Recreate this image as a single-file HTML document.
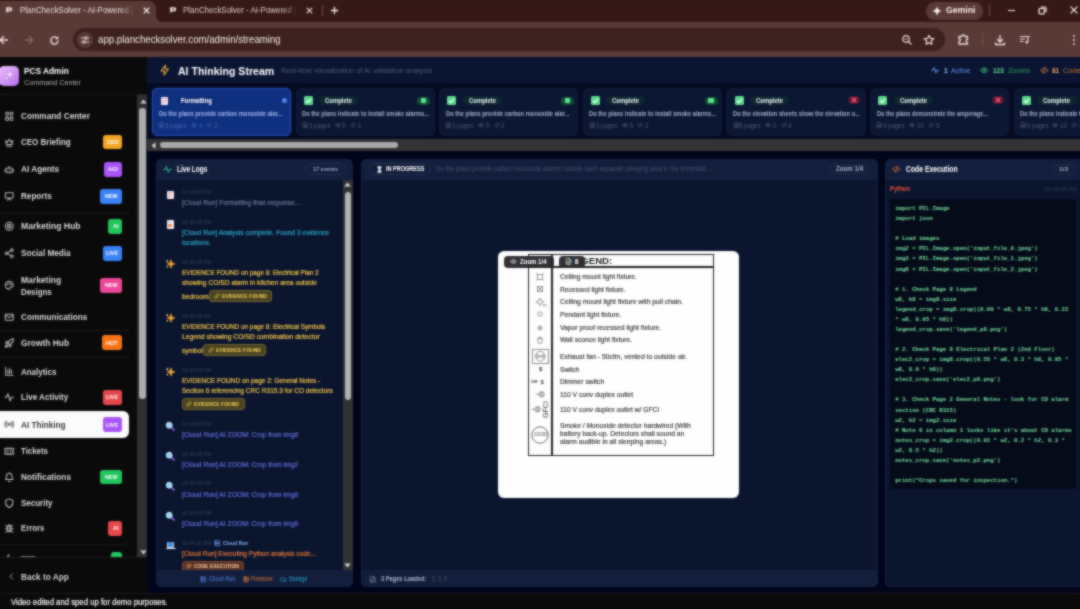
<!DOCTYPE html>
<html lang="en">
<head>
<meta charset="utf-8">
<title>PlanCheckSolver - AI-Powered</title>
<style>
*{box-sizing:border-box;margin:0;padding:0}
html,body{width:1080px;height:609px;overflow:hidden;background:#000}
body{font-family:"Liberation Sans",sans-serif;position:relative;color:#fff}
#pg{position:absolute;left:0;top:0;width:1080px;height:609px;overflow:hidden}
#soft{position:absolute;left:0;top:0;width:1080px;height:609px;-webkit-backdrop-filter:blur(.8px);backdrop-filter:blur(.8px);opacity:.7;pointer-events:none}
.abs{position:absolute}
.t{position:absolute;white-space:pre;line-height:1}
</style>
</head>
<body>
<div id="pg">
<!-- browser chrome -->
<div class="abs" style="left:0.0px;top:0.0px;width:1080.0px;height:23.0px;background:#371a17;"></div>
<div class="abs" style="left:0.0px;top:22.0px;width:1080.0px;height:34.5px;background:#5a3a36;"></div>
<div class="abs" style="left:-8.0px;top:1.0px;width:164.0px;height:24.0px;background:#5a3a36;border-radius:8px 8px 0 0;"></div>
<svg class="abs" style="left:156.0px;top:16.0px" width="6" height="6" viewBox="0 0 6 6" ><path d="M0 6V0a6 6 0 0 0 6 6z" fill="#5a3a36"/></svg>
<div class="abs" style="left:73.0px;top:28.3px;width:872.0px;height:22.8px;background:#3e211e;border-radius:11.4px;"></div>
<div class="abs" style="left:926.0px;top:2.0px;width:57.0px;height:17.5px;background:#5a3a36;border-radius:8.75px;"></div>
<svg class="abs" style="left:5.0px;top:6.0px" width="8" height="8" viewBox="0 0 8 8" ><path d="M1 1.200h4.200a2 2 0 0 1 0 4.200H3L1.400 7z" fill="#eadedb"/><circle cx="4.300" cy="3.300" r=".900" fill="#5a3a36"/></svg>
<span class="t" style="left:20.0px;top:6px;font-size:8.6px;color:#eadedb;transform:scaleX(0.923);transform-origin:0 0;-webkit-mask-image:linear-gradient(90deg,#000 108.3px,transparent 124.6px);overflow:hidden;width:127.8px;">PlanCheckSolver - AI-Powered | Plan</span>
<svg class="abs" style="left:143.0px;top:7.0px" width="7" height="7" viewBox="0 0 7 7" ><path d="M.8.800l5.400 5.400M6.200.800L.8 6.200" stroke="#f4eae8" stroke-width="1.300" fill="none"/></svg>
<svg class="abs" style="left:169.0px;top:6.0px" width="8" height="8" viewBox="0 0 8 8" ><path d="M1 1.200h4.200a2 2 0 0 1 0 4.200H3L1.400 7z" fill="#eadedb"/><circle cx="4.300" cy="3.300" r=".900" fill="#371a17"/></svg>
<span class="t" style="left:183.0px;top:6px;font-size:8.6px;color:#dccfcc;transform:scaleX(0.923);transform-origin:0 0;-webkit-mask-image:linear-gradient(90deg,#000 108.3px,transparent 124.6px);overflow:hidden;width:127.8px;">PlanCheckSolver - AI-Powered | Plan</span>
<svg class="abs" style="left:306.0px;top:7.0px" width="7" height="7" viewBox="0 0 7 7" ><path d="M.8.800l5.400 5.400M6.200.800L.8 6.200" stroke="#eadedb" stroke-width="1.200" fill="none"/></svg>
<div class="abs" style="left:322.0px;top:5.0px;width:1.0px;height:11.0px;background:#6a4a46;"></div>
<svg class="abs" style="left:330.0px;top:6.0px" width="9" height="9" viewBox="0 0 9 9" ><path d="M4.500.800v7.400M.8 4.500h7.400" stroke="#f4eae8" stroke-width="1.300" fill="none"/></svg>
<svg class="abs" style="left:932.0px;top:5.5px" width="10" height="10" viewBox="0 0 10 10" ><path d="M5 0C5.300 3 7 4.700 10 5 7 5.300 5.300 7 5 10 4.700 7 3 5.300 0 5 3 4.700 4.700 3 5 0z" fill="#f7efed"/></svg>
<span class="t" style="left:946.0px;top:6px;font-size:9.2px;color:#f4eae8;font-weight:bold;transform:scaleX(0.946);transform-origin:0 0;">Gemini</span>
<div class="abs" style="left:989.0px;top:4.0px;width:1.0px;height:12.0px;background:#6a4a46;"></div>
<div class="abs" style="left:1008.0px;top:9.5px;width:7.0px;height:1.3px;background:#f4eae8;"></div>
<svg class="abs" style="left:1038.0px;top:5.5px" width="9" height="9" viewBox="0 0 9 9" ><rect x="1" y="2.400" width="5.400" height="5.400" rx="1.300" stroke="#f4eae8" stroke-width="1.300" fill="none"/><path d="M3 1h3.600a1.500 1.500 0 0 1 1.500 1.500V6" stroke="#f4eae8" stroke-width="1.200" fill="none"/></svg>
<svg class="abs" style="left:1070.0px;top:6.0px" width="8" height="8" viewBox="0 0 8 8" ><path d="M.6.600l6.800 6.800M7.400.600L.6 7.400" stroke="#f4eae8" stroke-width="1.300" fill="none"/></svg>
<svg class="abs" style="left:-1.0px;top:35.0px" width="10" height="10" viewBox="0 0 10 10" ><path d="M9 5H1.500M5 1.200L1.200 5 5 8.800" stroke="#eadedb" stroke-width="1.300" fill="none"/></svg>
<svg class="abs" style="left:24.0px;top:35.0px" width="10" height="10" viewBox="0 0 10 10" ><path d="M1 5h7.500M5 1.200L8.800 5 5 8.800" stroke="#8a6b67" stroke-width="1.300" fill="none"/></svg>
<svg class="abs" style="left:49.0px;top:34.5px" width="11" height="11" viewBox="0 0 11 11" ><path d="M9 5.500A3.600 3.600 0 1 1 7.900 2.900" stroke="#eadedb" stroke-width="1.400" fill="none"/><path d="M9.300 1v3.200H6.100z" fill="#eadedb"/></svg>
<div class="abs" style="left:77.0px;top:32.0px;width:16.0px;height:16.0px;background:#5a3a36;border-radius:8px;"></div>
<svg class="abs" style="left:80.0px;top:35.0px" width="10" height="10" viewBox="0 0 10 10" ><path d="M1 3h3.500M7.500 3H9M1 7h1.500M5.500 7H9" stroke="#eadedb" stroke-width="1.200" fill="none"/><circle cx="6" cy="3" r="1.200" fill="none" stroke="#eadedb" stroke-width="1.100"/><circle cx="4" cy="7" r="1.200" fill="none" stroke="#eadedb" stroke-width="1.100"/></svg>
<span class="t" style="left:97.5px;top:35px;font-size:10.2px;color:#f3e9e7;transform:scaleX(0.949);transform-origin:0 0;">app.planchecksolver.com/admin/streaming</span>
<svg class="abs" style="left:901.0px;top:34.0px" width="12" height="12" viewBox="0 0 12 12" ><circle cx="5" cy="5" r="3.300" stroke="#eadedb" stroke-width="1.200" fill="none"/><path d="M7.500 7.500l3 3M3.500 5h3" stroke="#eadedb" stroke-width="1.200" fill="none"/></svg>
<svg class="abs" style="left:923.0px;top:33.5px" width="12" height="12" viewBox="0 0 12 12" ><path d="M6 1.300l1.400 3 3.300.400-2.400 2.200.600 3.300L6 8.600l-2.900 1.600.600-3.300L1.300 4.700l3.300-.400z" stroke="#eadedb" stroke-width="1.200" fill="none" stroke-linejoin="round"/></svg>
<svg class="abs" style="left:957.0px;top:33.0px" width="13" height="13" viewBox="0 0 13 13" ><path d="M2 3.500h2.800a1.500 1.500 0 0 1 3 0h2.700v2.800a1.500 1.500 0 0 0 0 3V11H2V8.500a1.400 1.400 0 0 0 0-2.800z" stroke="#eadedb" stroke-width="1.300" fill="none" stroke-linejoin="round"/></svg>
<div class="abs" style="left:982.0px;top:33.0px;width:1.0px;height:13.0px;background:#74544f;"></div>
<svg class="abs" style="left:994.0px;top:33.5px" width="12" height="12" viewBox="0 0 12 12" ><path d="M6 1v6.500M3 5l3 3 3-3M1.500 8.500v2h9v-2" stroke="#eadedb" stroke-width="1.300" fill="none"/></svg>
<svg class="abs" style="left:1019.0px;top:34.0px" width="12" height="12" viewBox="0 0 12 12" ><path d="M1 2.500h7M1 5h5M1 7.500h3.500" stroke="#eadedb" stroke-width="1.200" fill="none"/><path d="M8.500 2.500h2.300M8.800 2.500v5.500" stroke="#eadedb" stroke-width="1.200" fill="none"/><circle cx="7.800" cy="8.300" r="1.300" fill="#eadedb"/></svg>
<svg class="abs" style="left:1072.0px;top:33.5px" width="4" height="12" viewBox="0 0 4 12" ><circle cx="2" cy="2" r="1" fill="#eadedb"/><circle cx="2" cy="6" r="1" fill="#eadedb"/><circle cx="2" cy="10" r="1" fill="#eadedb"/></svg>
<!-- main header -->
<div class="abs" style="left:147.0px;top:56.5px;width:933.0px;height:537.0px;background:#02051a;"></div>
<div class="abs" style="left:147.0px;top:56.5px;width:933.0px;height:26.8px;background:#0b1532;"></div>
<div class="abs" style="left:147.0px;top:83.3px;width:933.0px;height:56.0px;background:#060b22;"></div>
<svg class="abs" style="left:158.5px;top:63.8px" width="12" height="12" viewBox="0 0 24 24" fill="none" stroke="#f0b232" stroke-width="2.1" stroke-linecap="round" stroke-linejoin="round"><path d="M13 2L4 14h7l-1 8 9-12h-7z"/></svg>
<span class="t" style="left:177.8px;top:65px;font-size:11.6px;color:#fff;font-weight:bold;transform:scaleX(0.910);transform-origin:0 0;">AI Thinking Stream</span>
<span class="t" style="left:281.0px;top:67px;font-size:7.9px;color:#4d5a7a;transform:scaleX(0.927);transform-origin:0 0;">Real-time visualization of AI validation analysis</span>
<svg class="abs" style="left:931.2px;top:66.0px" width="8.5" height="8.5" viewBox="0 0 24 24" fill="none" stroke="#6f9bf5" stroke-width="2.6" stroke-linecap="round" stroke-linejoin="round"><path d="M2 12h4l3-8 5 16 3-8h5"/></svg>
<span class="t" style="left:943.7px;top:67px;font-size:7.8px;color:#a6c3fb;font-weight:bold;transform:scaleX(0.830);transform-origin:0 0;">1</span>
<span class="t" style="left:950.5px;top:67px;font-size:7.8px;color:#5f8de8;transform:scaleX(0.918);transform-origin:0 0;">Active</span>
<svg class="abs" style="left:980.2px;top:66.0px" width="8.5" height="8.5" viewBox="0 0 24 24" fill="none" stroke="#3fbf74" stroke-width="2.6" stroke-linecap="round" stroke-linejoin="round"><path d="M2 12s3.600-7 10-7 10 7 10 7-3.600 7-10 7-10-7-10-7z"/><circle cx="12" cy="12" r="3"/></svg>
<span class="t" style="left:992.5px;top:67px;font-size:7.8px;color:#5fe08f;font-weight:bold;transform:scaleX(0.830);transform-origin:0 0;">123</span>
<span class="t" style="left:1007.5px;top:67px;font-size:7.8px;color:#2f9d5d;transform:scaleX(0.931);transform-origin:0 0;">Zooms</span>
<svg class="abs" style="left:1040.2px;top:66.0px" width="8.5" height="8.5" viewBox="0 0 24 24" fill="none" stroke="#ee8a3c" stroke-width="2.6" stroke-linecap="round" stroke-linejoin="round"><path d="M8 6l-6 6 6 6M16 6l6 6-6 6M14 4l-4 16"/></svg>
<span class="t" style="left:1052.0px;top:67px;font-size:7.8px;color:#fba55d;font-weight:bold;transform:scaleX(0.830);transform-origin:0 0;">81</span>
<span class="t" style="left:1063.0px;top:67px;font-size:7.8px;color:#c8702f;transform:scaleX(0.938);transform-origin:0 0;">Code</span>
<!-- cards -->
<div class="abs" style="left:152.0px;top:88.1px;width:139.2px;height:47.9px;background:#10317f;border-radius:5px;border:1px solid #234cae;box-shadow:0 0 3px rgba(44,90,208,.3);"></div>
<div class="abs" style="left:160.9px;top:96.5px;width:7.2px;height:8.0px;background:#f1e9ee;border-radius:1px;"></div><div class="abs" style="left:162.2px;top:98.3px;width:4.6px;height:0.9px;background:#e7a9b4;"></div><div class="abs" style="left:162.2px;top:100.2px;width:4.6px;height:0.9px;background:#e7a9b4;"></div><div class="abs" style="left:162.2px;top:102.1px;width:3.2px;height:0.9px;background:#e7a9b4;"></div>
<div class="abs" style="left:177.0px;top:95.8px;width:39.0px;height:9.6px;background:#0f2d78;border-radius:4.8px;"></div>
<span class="t" style="left:181.3px;top:98px;font-size:6.6px;color:#fff;font-weight:bold;transform:scaleX(0.900);transform-origin:0 0;">Formatting</span>
<div class="abs" style="left:281.8px;top:97.6px;width:5.2px;height:5.2px;background:#4f86ec;border-radius:2.6px;"></div>
<span class="t" style="left:158.5px;top:111px;font-size:6.5px;color:#9fb2e6;font-weight:bold;transform:scaleX(0.890);transform-origin:0 0;">Do the plans provide carbon monoxide alar...</span>
<svg class="abs" style="left:158.2px;top:122.4px" width="6.3" height="6.3" viewBox="0 0 24 24" fill="none" stroke="#4060ae" stroke-width="2.6" stroke-linecap="round" stroke-linejoin="round"><path d="M14 2H6a2 2 0 0 0-2 2v16a2 2 0 0 0 2 2h12a2 2 0 0 0 2-2V8z"/><path d="M14 2v6h6M8 13h8M8 17h8"/></svg>
<span class="t" style="left:165.0px;top:123px;font-size:6.3px;color:#4060ae;transform:scaleX(0.959);transform-origin:0 0;">3 pages</span>
<svg class="abs" style="left:190.8px;top:122.4px" width="6.3" height="6.3" viewBox="0 0 24 24" fill="none" stroke="#4060ae" stroke-width="2.6" stroke-linecap="round" stroke-linejoin="round"><path d="M2 12s3.600-7 10-7 10 7 10 7-3.600 7-10 7-10-7-10-7z"/><circle cx="12" cy="12" r="3"/></svg>
<span class="t" style="left:198.8px;top:123px;font-size:6.3px;color:#4060ae;transform:scaleX(0.999);transform-origin:0 0;">4</span>
<svg class="abs" style="left:206.3px;top:122.4px" width="6.3" height="6.3" viewBox="0 0 24 24" fill="none" stroke="#4060ae" stroke-width="2.6" stroke-linecap="round" stroke-linejoin="round"><path d="M8 6l-6 6 6 6M16 6l6 6-6 6M14 4l-4 16"/></svg>
<span class="t" style="left:214.0px;top:123px;font-size:6.3px;color:#4060ae;transform:scaleX(0.999);transform-origin:0 0;">2</span>
<div class="abs" style="left:295.6px;top:88.1px;width:139.2px;height:47.9px;background:#0d1733;border-radius:5px;border:1px solid #101a38;"></div>
<div class="abs" style="left:303.8px;top:96.2px;width:9.0px;height:9.0px;background:#5ad88d;border-radius:1.5px;"></div>
<svg class="abs" style="left:303.8px;top:96.2px" width="9" height="9" viewBox="0 0 9 9" ><path d="M2 4.700l1.800 1.900L7 2.800" stroke="#f2fff6" stroke-width="1.300" fill="none"/></svg>
<div class="abs" style="left:319.1px;top:96.0px;width:39.0px;height:9.4px;background:#0d2631;border-radius:4.7px;"></div>
<span class="t" style="left:325.2px;top:98px;font-size:6.6px;color:#f1f5f4;font-weight:bold;transform:scaleX(0.898);transform-origin:0 0;">Complete</span>
<div class="abs" style="left:417.3px;top:96.5px;width:13.0px;height:8.2px;background:#124d33;border-radius:4px;"></div>
<div class="abs" style="left:421.2px;top:98.0px;width:5.2px;height:5.2px;background:#5fe08f;border-radius:0.8px;"></div>
<span class="t" style="left:302.1px;top:111px;font-size:6.5px;color:#a3adc6;font-weight:bold;transform:scaleX(0.879);transform-origin:0 0;">Do the plans indicate to install smoke alarms...</span>
<svg class="abs" style="left:301.8px;top:122.4px" width="6.3" height="6.3" viewBox="0 0 24 24" fill="none" stroke="#4c5875" stroke-width="2.6" stroke-linecap="round" stroke-linejoin="round"><path d="M14 2H6a2 2 0 0 0-2 2v16a2 2 0 0 0 2 2h12a2 2 0 0 0 2-2V8z"/><path d="M14 2v6h6M8 13h8M8 17h8"/></svg>
<span class="t" style="left:308.6px;top:123px;font-size:6.3px;color:#4c5875;transform:scaleX(0.959);transform-origin:0 0;">3 pages</span>
<svg class="abs" style="left:334.5px;top:122.4px" width="6.3" height="6.3" viewBox="0 0 24 24" fill="none" stroke="#4c5875" stroke-width="2.6" stroke-linecap="round" stroke-linejoin="round"><path d="M2 12s3.600-7 10-7 10 7 10 7-3.600 7-10 7-10-7-10-7z"/><circle cx="12" cy="12" r="3"/></svg>
<span class="t" style="left:342.4px;top:123px;font-size:6.3px;color:#4c5875;transform:scaleX(0.999);transform-origin:0 0;">5</span>
<svg class="abs" style="left:350.0px;top:122.4px" width="6.3" height="6.3" viewBox="0 0 24 24" fill="none" stroke="#4c5875" stroke-width="2.6" stroke-linecap="round" stroke-linejoin="round"><path d="M8 6l-6 6 6 6M16 6l6 6-6 6M14 4l-4 16"/></svg>
<span class="t" style="left:357.6px;top:123px;font-size:6.3px;color:#4c5875;transform:scaleX(0.999);transform-origin:0 0;">1</span>
<div class="abs" style="left:439.2px;top:88.1px;width:139.2px;height:47.9px;background:#0d1733;border-radius:5px;border:1px solid #101a38;"></div>
<div class="abs" style="left:447.4px;top:96.2px;width:9.0px;height:9.0px;background:#5ad88d;border-radius:1.5px;"></div>
<svg class="abs" style="left:447.4px;top:96.2px" width="9" height="9" viewBox="0 0 9 9" ><path d="M2 4.700l1.800 1.900L7 2.800" stroke="#f2fff6" stroke-width="1.300" fill="none"/></svg>
<div class="abs" style="left:462.7px;top:96.0px;width:39.0px;height:9.4px;background:#0d2631;border-radius:4.7px;"></div>
<span class="t" style="left:468.8px;top:98px;font-size:6.6px;color:#f1f5f4;font-weight:bold;transform:scaleX(0.898);transform-origin:0 0;">Complete</span>
<div class="abs" style="left:560.9px;top:96.5px;width:13.0px;height:8.2px;background:#124d33;border-radius:4px;"></div>
<div class="abs" style="left:564.8px;top:98.0px;width:5.2px;height:5.2px;background:#5fe08f;border-radius:0.8px;"></div>
<span class="t" style="left:445.7px;top:111px;font-size:6.5px;color:#a3adc6;font-weight:bold;transform:scaleX(0.890);transform-origin:0 0;">Do the plans provide carbon monoxide alar...</span>
<svg class="abs" style="left:445.4px;top:122.4px" width="6.3" height="6.3" viewBox="0 0 24 24" fill="none" stroke="#4c5875" stroke-width="2.6" stroke-linecap="round" stroke-linejoin="round"><path d="M14 2H6a2 2 0 0 0-2 2v16a2 2 0 0 0 2 2h12a2 2 0 0 0 2-2V8z"/><path d="M14 2v6h6M8 13h8M8 17h8"/></svg>
<span class="t" style="left:452.2px;top:123px;font-size:6.3px;color:#4c5875;transform:scaleX(0.959);transform-origin:0 0;">3 pages</span>
<svg class="abs" style="left:478.1px;top:122.4px" width="6.3" height="6.3" viewBox="0 0 24 24" fill="none" stroke="#4c5875" stroke-width="2.6" stroke-linecap="round" stroke-linejoin="round"><path d="M2 12s3.600-7 10-7 10 7 10 7-3.600 7-10 7-10-7-10-7z"/><circle cx="12" cy="12" r="3"/></svg>
<span class="t" style="left:486.0px;top:123px;font-size:6.3px;color:#4c5875;transform:scaleX(0.999);transform-origin:0 0;">5</span>
<svg class="abs" style="left:493.6px;top:122.4px" width="6.3" height="6.3" viewBox="0 0 24 24" fill="none" stroke="#4c5875" stroke-width="2.6" stroke-linecap="round" stroke-linejoin="round"><path d="M8 6l-6 6 6 6M16 6l6 6-6 6M14 4l-4 16"/></svg>
<span class="t" style="left:501.2px;top:123px;font-size:6.3px;color:#4c5875;transform:scaleX(0.999);transform-origin:0 0;">2</span>
<div class="abs" style="left:582.8px;top:88.1px;width:139.2px;height:47.9px;background:#0d1733;border-radius:5px;border:1px solid #101a38;"></div>
<div class="abs" style="left:591.0px;top:96.2px;width:9.0px;height:9.0px;background:#5ad88d;border-radius:1.5px;"></div>
<svg class="abs" style="left:591.0px;top:96.2px" width="9" height="9" viewBox="0 0 9 9" ><path d="M2 4.700l1.800 1.900L7 2.800" stroke="#f2fff6" stroke-width="1.300" fill="none"/></svg>
<div class="abs" style="left:606.3px;top:96.0px;width:39.0px;height:9.4px;background:#0d2631;border-radius:4.7px;"></div>
<span class="t" style="left:612.4px;top:98px;font-size:6.6px;color:#f1f5f4;font-weight:bold;transform:scaleX(0.898);transform-origin:0 0;">Complete</span>
<div class="abs" style="left:704.5px;top:96.5px;width:13.0px;height:8.2px;background:#124d33;border-radius:4px;"></div>
<div class="abs" style="left:708.4px;top:98.0px;width:5.2px;height:5.2px;background:#5fe08f;border-radius:0.8px;"></div>
<span class="t" style="left:589.3px;top:111px;font-size:6.5px;color:#a3adc6;font-weight:bold;transform:scaleX(0.879);transform-origin:0 0;">Do the plans indicate to install smoke alarms...</span>
<svg class="abs" style="left:588.9px;top:122.4px" width="6.3" height="6.3" viewBox="0 0 24 24" fill="none" stroke="#4c5875" stroke-width="2.6" stroke-linecap="round" stroke-linejoin="round"><path d="M14 2H6a2 2 0 0 0-2 2v16a2 2 0 0 0 2 2h12a2 2 0 0 0 2-2V8z"/><path d="M14 2v6h6M8 13h8M8 17h8"/></svg>
<span class="t" style="left:595.8px;top:123px;font-size:6.3px;color:#4c5875;transform:scaleX(0.959);transform-origin:0 0;">3 pages</span>
<svg class="abs" style="left:621.6px;top:122.4px" width="6.3" height="6.3" viewBox="0 0 24 24" fill="none" stroke="#4c5875" stroke-width="2.6" stroke-linecap="round" stroke-linejoin="round"><path d="M2 12s3.600-7 10-7 10 7 10 7-3.600 7-10 7-10-7-10-7z"/><circle cx="12" cy="12" r="3"/></svg>
<span class="t" style="left:629.6px;top:123px;font-size:6.3px;color:#4c5875;transform:scaleX(0.999);transform-origin:0 0;">6</span>
<svg class="abs" style="left:637.1px;top:122.4px" width="6.3" height="6.3" viewBox="0 0 24 24" fill="none" stroke="#4c5875" stroke-width="2.6" stroke-linecap="round" stroke-linejoin="round"><path d="M8 6l-6 6 6 6M16 6l6 6-6 6M14 4l-4 16"/></svg>
<span class="t" style="left:644.8px;top:123px;font-size:6.3px;color:#4c5875;transform:scaleX(0.999);transform-origin:0 0;">2</span>
<div class="abs" style="left:726.4px;top:88.1px;width:139.2px;height:47.9px;background:#0d1733;border-radius:5px;border:1px solid #101a38;"></div>
<div class="abs" style="left:734.6px;top:96.2px;width:9.0px;height:9.0px;background:#5ad88d;border-radius:1.5px;"></div>
<svg class="abs" style="left:734.6px;top:96.2px" width="9" height="9" viewBox="0 0 9 9" ><path d="M2 4.700l1.800 1.900L7 2.800" stroke="#f2fff6" stroke-width="1.300" fill="none"/></svg>
<div class="abs" style="left:749.9px;top:96.0px;width:39.0px;height:9.4px;background:#0d2631;border-radius:4.7px;"></div>
<span class="t" style="left:756.0px;top:98px;font-size:6.6px;color:#f1f5f4;font-weight:bold;transform:scaleX(0.898);transform-origin:0 0;">Complete</span>
<div class="abs" style="left:848.3px;top:96.3px;width:11.8px;height:8.2px;background:#5a1730;border-radius:4px;"></div>
<svg class="abs" style="left:851.2px;top:97.4px" width="6" height="6" viewBox="0 0 6 6" ><path d="M.8.800l4.400 4.400M5.200.800L.8 5.200" stroke="#ff5a78" stroke-width="1.500" fill="none"/></svg>
<span class="t" style="left:732.9px;top:111px;font-size:6.5px;color:#a3adc6;font-weight:bold;transform:scaleX(0.883);transform-origin:0 0;">Do the elevation sheets show the elevation o...</span>
<svg class="abs" style="left:732.5px;top:122.4px" width="6.3" height="6.3" viewBox="0 0 24 24" fill="none" stroke="#4c5875" stroke-width="2.6" stroke-linecap="round" stroke-linejoin="round"><path d="M14 2H6a2 2 0 0 0-2 2v16a2 2 0 0 0 2 2h12a2 2 0 0 0 2-2V8z"/><path d="M14 2v6h6M8 13h8M8 17h8"/></svg>
<span class="t" style="left:739.4px;top:123px;font-size:6.3px;color:#4c5875;transform:scaleX(0.959);transform-origin:0 0;">5 pages</span>
<svg class="abs" style="left:765.2px;top:122.4px" width="6.3" height="6.3" viewBox="0 0 24 24" fill="none" stroke="#4c5875" stroke-width="2.6" stroke-linecap="round" stroke-linejoin="round"><path d="M2 12s3.600-7 10-7 10 7 10 7-3.600 7-10 7-10-7-10-7z"/><circle cx="12" cy="12" r="3"/></svg>
<span class="t" style="left:773.2px;top:123px;font-size:6.3px;color:#4c5875;transform:scaleX(0.999);transform-origin:0 0;">0</span>
<svg class="abs" style="left:780.8px;top:122.4px" width="6.3" height="6.3" viewBox="0 0 24 24" fill="none" stroke="#4c5875" stroke-width="2.6" stroke-linecap="round" stroke-linejoin="round"><path d="M8 6l-6 6 6 6M16 6l6 6-6 6M14 4l-4 16"/></svg>
<span class="t" style="left:788.4px;top:123px;font-size:6.3px;color:#4c5875;transform:scaleX(0.999);transform-origin:0 0;">4</span>
<div class="abs" style="left:870.0px;top:88.1px;width:139.2px;height:47.9px;background:#0d1733;border-radius:5px;border:1px solid #101a38;"></div>
<div class="abs" style="left:878.2px;top:96.2px;width:9.0px;height:9.0px;background:#5ad88d;border-radius:1.5px;"></div>
<svg class="abs" style="left:878.2px;top:96.2px" width="9" height="9" viewBox="0 0 9 9" ><path d="M2 4.700l1.800 1.900L7 2.800" stroke="#f2fff6" stroke-width="1.300" fill="none"/></svg>
<div class="abs" style="left:893.5px;top:96.0px;width:39.0px;height:9.4px;background:#0d2631;border-radius:4.7px;"></div>
<span class="t" style="left:899.6px;top:98px;font-size:6.6px;color:#f1f5f4;font-weight:bold;transform:scaleX(0.898);transform-origin:0 0;">Complete</span>
<div class="abs" style="left:991.9px;top:96.3px;width:11.8px;height:8.2px;background:#5a1730;border-radius:4px;"></div>
<svg class="abs" style="left:994.8px;top:97.4px" width="6" height="6" viewBox="0 0 6 6" ><path d="M.8.800l4.400 4.400M5.200.800L.8 5.200" stroke="#ff5a78" stroke-width="1.500" fill="none"/></svg>
<span class="t" style="left:876.5px;top:111px;font-size:6.5px;color:#a3adc6;font-weight:bold;transform:scaleX(0.858);transform-origin:0 0;">Do the plans demonstrate the amperage...</span>
<svg class="abs" style="left:876.1px;top:122.4px" width="6.3" height="6.3" viewBox="0 0 24 24" fill="none" stroke="#4c5875" stroke-width="2.6" stroke-linecap="round" stroke-linejoin="round"><path d="M14 2H6a2 2 0 0 0-2 2v16a2 2 0 0 0 2 2h12a2 2 0 0 0 2-2V8z"/><path d="M14 2v6h6M8 13h8M8 17h8"/></svg>
<span class="t" style="left:883.0px;top:123px;font-size:6.3px;color:#4c5875;transform:scaleX(0.959);transform-origin:0 0;">4 pages</span>
<svg class="abs" style="left:908.9px;top:122.4px" width="6.3" height="6.3" viewBox="0 0 24 24" fill="none" stroke="#4c5875" stroke-width="2.6" stroke-linecap="round" stroke-linejoin="round"><path d="M2 12s3.600-7 10-7 10 7 10 7-3.600 7-10 7-10-7-10-7z"/><circle cx="12" cy="12" r="3"/></svg>
<span class="t" style="left:916.8px;top:123px;font-size:6.3px;color:#4c5875;transform:scaleX(0.999);transform-origin:0 0;">10</span>
<svg class="abs" style="left:927.9px;top:122.4px" width="6.3" height="6.3" viewBox="0 0 24 24" fill="none" stroke="#4c5875" stroke-width="2.6" stroke-linecap="round" stroke-linejoin="round"><path d="M8 6l-6 6 6 6M16 6l6 6-6 6M14 4l-4 16"/></svg>
<span class="t" style="left:935.5px;top:123px;font-size:6.3px;color:#4c5875;transform:scaleX(0.999);transform-origin:0 0;">5</span>
<div class="abs" style="left:1013.6px;top:88.1px;width:139.2px;height:47.9px;background:#0d1733;border-radius:5px;border:1px solid #101a38;"></div>
<div class="abs" style="left:1021.8px;top:96.2px;width:9.0px;height:9.0px;background:#5ad88d;border-radius:1.5px;"></div>
<svg class="abs" style="left:1021.8px;top:96.2px" width="9" height="9" viewBox="0 0 9 9" ><path d="M2 4.700l1.800 1.900L7 2.800" stroke="#f2fff6" stroke-width="1.300" fill="none"/></svg>
<div class="abs" style="left:1037.1px;top:96.0px;width:39.0px;height:9.4px;background:#0d2631;border-radius:4.7px;"></div>
<span class="t" style="left:1043.2px;top:98px;font-size:6.6px;color:#f1f5f4;font-weight:bold;transform:scaleX(0.898);transform-origin:0 0;">Complete</span>
<div class="abs" style="left:1135.3px;top:96.5px;width:13.0px;height:8.2px;background:#124d33;border-radius:4px;"></div>
<div class="abs" style="left:1139.2px;top:98.0px;width:5.2px;height:5.2px;background:#5fe08f;border-radius:0.8px;"></div>
<span class="t" style="left:1020.1px;top:111px;font-size:6.5px;color:#a3adc6;font-weight:bold;transform:scaleX(0.879);transform-origin:0 0;">Do the plans indicate to install smoke alarms...</span>
<svg class="abs" style="left:1019.7px;top:122.4px" width="6.3" height="6.3" viewBox="0 0 24 24" fill="none" stroke="#4c5875" stroke-width="2.6" stroke-linecap="round" stroke-linejoin="round"><path d="M14 2H6a2 2 0 0 0-2 2v16a2 2 0 0 0 2 2h12a2 2 0 0 0 2-2V8z"/><path d="M14 2v6h6M8 13h8M8 17h8"/></svg>
<span class="t" style="left:1026.6px;top:123px;font-size:6.3px;color:#4c5875;transform:scaleX(0.959);transform-origin:0 0;">6 pages</span>
<svg class="abs" style="left:1052.4px;top:122.4px" width="6.3" height="6.3" viewBox="0 0 24 24" fill="none" stroke="#4c5875" stroke-width="2.6" stroke-linecap="round" stroke-linejoin="round"><path d="M2 12s3.600-7 10-7 10 7 10 7-3.600 7-10 7-10-7-10-7z"/><circle cx="12" cy="12" r="3"/></svg>
<span class="t" style="left:1060.4px;top:123px;font-size:6.3px;color:#4c5875;transform:scaleX(0.999);transform-origin:0 0;">10</span>
<svg class="abs" style="left:1071.4px;top:122.4px" width="6.3" height="6.3" viewBox="0 0 24 24" fill="none" stroke="#4c5875" stroke-width="2.6" stroke-linecap="round" stroke-linejoin="round"><path d="M8 6l-6 6 6 6M16 6l6 6-6 6M14 4l-4 16"/></svg>
<span class="t" style="left:1079.1px;top:123px;font-size:6.3px;color:#4c5875;transform:scaleX(0.999);transform-origin:0 0;">3</span>
<div class="abs" style="left:147.0px;top:139.4px;width:933.0px;height:11.7px;background:#343437;"></div>
<div class="abs" style="left:160.0px;top:142.3px;width:238.0px;height:6.0px;background:#a9a9aa;border-radius:3px;"></div>
<svg class="abs" style="left:150.5px;top:142.0px" width="5" height="7" viewBox="0 0 5 7" ><path d="M.5 3.500L4.500.2v6.600z" fill="#d0d0d0"/></svg>
<!-- logs -->
<div class="abs" style="left:155.5px;top:158.5px;width:197.5px;height:428.5px;background:#0b152e;border-radius:5px;border:1px solid #152142;"></div>
<div class="abs" style="left:155.5px;top:158.5px;width:197.5px;height:21.0px;background:#131e3c;border-radius:5px 5px 0 0;border:1px solid #152142;"></div>
<svg class="abs" style="left:162.5px;top:164.7px" width="9" height="9" viewBox="0 0 24 24" fill="none" stroke="#2fcf9a" stroke-width="2.4" stroke-linecap="round" stroke-linejoin="round"><path d="M2 12h4l3-8 5 16 3-8h5"/></svg>
<span class="t" style="left:177.0px;top:165px;font-size:8.4px;color:#fff;font-weight:bold;transform:scaleX(0.778);transform-origin:0 0;">Live Logs</span>
<div class="abs" style="left:306.0px;top:163.3px;width:39.5px;height:11.5px;background:#141f3d;border-radius:5.7px;border:1px solid #24314f;"></div>
<span class="t" style="left:313.2px;top:166px;font-size:6px;color:#9aa6c4;font-weight:bold;transform:scaleX(0.914);transform-origin:0 0;">17 events</span>
<div class="abs" style="left:166.5px;top:190.5px;width:7.2px;height:8.0px;background:#f1e9ee;border-radius:1px;"></div><div class="abs" style="left:167.8px;top:192.3px;width:4.6px;height:0.9px;background:#e7a9b4;"></div><div class="abs" style="left:167.8px;top:194.2px;width:4.6px;height:0.9px;background:#e7a9b4;"></div><div class="abs" style="left:167.8px;top:196.1px;width:3.2px;height:0.9px;background:#e7a9b4;"></div>
<span class="t" style="left:181.7px;top:190px;font-size:5.7px;color:#36425f;transform:scaleX(0.907);transform-origin:0 0;">10:44:09 PM</span>
<span class="t" style="left:181.7px;top:199px;font-size:7.3px;color:#677493;-webkit-text-stroke:0.22px #677493;transform:scaleX(0.917);transform-origin:0 0;">[Cloud Run] Formatting final response...</span>
<div class="abs" style="left:166.5px;top:220.2px;width:7.2px;height:8.4px;background:#efeaf0;border-radius:1px;"></div><div class="abs" style="left:167.8px;top:223.5px;width:4.6px;height:3.8px;background:#ee8a5a;border-radius:1.2px;"></div><div class="abs" style="left:167.8px;top:221.5px;width:3.0px;height:0.9px;background:#c9c3d0;"></div>
<span class="t" style="left:181.7px;top:220px;font-size:5.7px;color:#36425f;transform:scaleX(0.907);transform-origin:0 0;">10:44:09 PM</span>
<span class="t" style="left:181.7px;top:229px;font-size:7.3px;color:#2aa3c2;-webkit-text-stroke:0.22px #2aa3c2;transform:scaleX(0.914);transform-origin:0 0;">[Cloud Run] Analysis complete. Found 3 evidence</span>
<span class="t" style="left:181.7px;top:239px;font-size:7.3px;color:#2aa3c2;-webkit-text-stroke:0.22px #2aa3c2;transform:scaleX(0.934);transform-origin:0 0;">locations.</span>
<svg class="abs" style="left:165.0px;top:259.0px" width="10" height="10" viewBox="0 0 10 10" ><path d="M6 .800C6.400 3.600 7 4.400 9.800 5 7 5.600 6.400 6.400 6 9.200 5.600 6.400 5 5.600 2.200 5 5 4.400 5.600 3.600 6 .800z" fill="#f6a93a" stroke="#f6a93a" stroke-width=".800" stroke-linejoin="round"/><path d="M2.300.300C2.500 1.600 2.800 2 4.100 2.200 2.800 2.400 2.500 2.800 2.300 4.100 2.100 2.800 1.800 2.400.5 2.200 1.800 2 2.100 1.600 2.300.300z" fill="#fbd475"/><path d="M2.300 6.300C2.450 7.300 2.700 7.600 3.700 7.800 2.700 8 2.450 8.300 2.300 9.300 2.150 8.300 1.900 8 .9 7.800 1.900 7.600 2.150 7.300 2.300 6.300z" fill="#fbd475"/></svg>
<span class="t" style="left:181.7px;top:260px;font-size:5.7px;color:#36425f;transform:scaleX(0.907);transform-origin:0 0;">10:44:09 PM</span>
<span class="t" style="left:181.7px;top:269px;font-size:7.3px;color:#edc048;-webkit-text-stroke:0.22px #edc048;transform:scaleX(0.875);transform-origin:0 0;">EVIDENCE FOUND on page 8: Electrical Plan 2</span>
<span class="t" style="left:181.7px;top:279px;font-size:7.3px;color:#edc048;-webkit-text-stroke:0.22px #edc048;transform:scaleX(0.917);transform-origin:0 0;">showing CO/SD alarm in kitchen area outside</span>
<span class="t" style="left:181.7px;top:293px;font-size:7.3px;color:#edc048;-webkit-text-stroke:0.22px #edc048;transform:scaleX(0.927);transform-origin:0 0;">bedroom</span>
<div class="abs" style="left:209.0px;top:290.4px;width:63.0px;height:11.6px;background:#4a4322;border-radius:3px;border:1px solid #6f6230;"></div><svg class="abs" style="left:213.5px;top:293.2px" width="6" height="6" viewBox="0 0 24 24" fill="none" stroke="#e5c04a" stroke-width="2.8" stroke-linecap="round" stroke-linejoin="round"><path d="M10 13a5 5 0 0 0 7.500.500l3-3a5 5 0 0 0-7-7l-1.700 1.700"/><path d="M14 11a5 5 0 0 0-7.500-.500l-3 3a5 5 0 0 0 7 7l1.700-1.700"/></svg><span class="t" style="left:221.5px;top:294px;font-size:5.7px;color:#f2cf55;font-weight:bold;transform:scaleX(0.883);transform-origin:0 0;">EVIDENCE FOUND</span>
<svg class="abs" style="left:165.0px;top:313.0px" width="10" height="10" viewBox="0 0 10 10" ><path d="M6 .800C6.400 3.600 7 4.400 9.800 5 7 5.600 6.400 6.400 6 9.200 5.600 6.400 5 5.600 2.200 5 5 4.400 5.600 3.600 6 .800z" fill="#f6a93a" stroke="#f6a93a" stroke-width=".800" stroke-linejoin="round"/><path d="M2.300.300C2.500 1.600 2.800 2 4.100 2.200 2.800 2.400 2.500 2.800 2.300 4.100 2.100 2.800 1.800 2.400.5 2.200 1.800 2 2.100 1.600 2.300.300z" fill="#fbd475"/><path d="M2.300 6.300C2.450 7.300 2.700 7.600 3.700 7.800 2.700 8 2.450 8.300 2.300 9.300 2.150 8.300 1.900 8 .9 7.800 1.900 7.600 2.150 7.300 2.300 6.300z" fill="#fbd475"/></svg>
<span class="t" style="left:181.7px;top:314px;font-size:5.7px;color:#36425f;transform:scaleX(0.907);transform-origin:0 0;">10:44:09 PM</span>
<span class="t" style="left:181.7px;top:323px;font-size:7.3px;color:#edc048;-webkit-text-stroke:0.22px #edc048;transform:scaleX(0.876);transform-origin:0 0;">EVIDENCE FOUND on page 8: Electrical Symbols</span>
<span class="t" style="left:181.7px;top:333px;font-size:7.3px;color:#edc048;-webkit-text-stroke:0.22px #edc048;transform:scaleX(0.930);transform-origin:0 0;">Legend showing CO/SD combination detector</span>
<span class="t" style="left:181.7px;top:347px;font-size:7.3px;color:#edc048;-webkit-text-stroke:0.22px #edc048;transform:scaleX(0.900);transform-origin:0 0;">symbol</span>
<div class="abs" style="left:203.3px;top:344.4px;width:63.0px;height:11.6px;background:#4a4322;border-radius:3px;border:1px solid #6f6230;"></div><svg class="abs" style="left:207.8px;top:347.2px" width="6" height="6" viewBox="0 0 24 24" fill="none" stroke="#e5c04a" stroke-width="2.8" stroke-linecap="round" stroke-linejoin="round"><path d="M10 13a5 5 0 0 0 7.500.500l3-3a5 5 0 0 0-7-7l-1.700 1.700"/><path d="M14 11a5 5 0 0 0-7.500-.500l-3 3a5 5 0 0 0 7 7l1.700-1.700"/></svg><span class="t" style="left:215.8px;top:348px;font-size:5.7px;color:#f2cf55;font-weight:bold;transform:scaleX(0.883);transform-origin:0 0;">EVIDENCE FOUND</span>
<svg class="abs" style="left:165.0px;top:367.0px" width="10" height="10" viewBox="0 0 10 10" ><path d="M6 .800C6.400 3.600 7 4.400 9.800 5 7 5.600 6.400 6.400 6 9.200 5.600 6.400 5 5.600 2.200 5 5 4.400 5.600 3.600 6 .800z" fill="#f6a93a" stroke="#f6a93a" stroke-width=".800" stroke-linejoin="round"/><path d="M2.300.300C2.500 1.600 2.800 2 4.100 2.200 2.800 2.400 2.500 2.800 2.300 4.100 2.100 2.800 1.800 2.400.5 2.200 1.800 2 2.100 1.600 2.300.300z" fill="#fbd475"/><path d="M2.300 6.300C2.450 7.300 2.700 7.600 3.700 7.800 2.700 8 2.450 8.300 2.300 9.300 2.150 8.300 1.900 8 .9 7.800 1.900 7.600 2.150 7.300 2.300 6.300z" fill="#fbd475"/></svg>
<span class="t" style="left:181.7px;top:368px;font-size:5.7px;color:#36425f;transform:scaleX(0.907);transform-origin:0 0;">10:44:09 PM</span>
<span class="t" style="left:181.7px;top:377px;font-size:7.3px;color:#edc048;-webkit-text-stroke:0.22px #edc048;transform:scaleX(0.890);transform-origin:0 0;">EVIDENCE FOUND on page 2: General Notes -</span>
<span class="t" style="left:181.7px;top:387px;font-size:7.3px;color:#edc048;-webkit-text-stroke:0.22px #edc048;transform:scaleX(0.898);transform-origin:0 0;">Section 6 referencing CRC R315.3 for CO detectors</span>
<div class="abs" style="left:181.7px;top:398.4px;width:63.0px;height:11.6px;background:#4a4322;border-radius:3px;border:1px solid #6f6230;"></div><svg class="abs" style="left:186.2px;top:401.2px" width="6" height="6" viewBox="0 0 24 24" fill="none" stroke="#e5c04a" stroke-width="2.8" stroke-linecap="round" stroke-linejoin="round"><path d="M10 13a5 5 0 0 0 7.500.500l3-3a5 5 0 0 0-7-7l-1.700 1.700"/><path d="M14 11a5 5 0 0 0-7.500-.500l-3 3a5 5 0 0 0 7 7l1.700-1.700"/></svg><span class="t" style="left:194.2px;top:402px;font-size:5.7px;color:#f2cf55;font-weight:bold;transform:scaleX(0.883);transform-origin:0 0;">EVIDENCE FOUND</span>
<svg class="abs" style="left:165.0px;top:421.2px" width="10" height="10" viewBox="0 0 10 10" ><path d="M6 6l3 3" stroke="#7a5bd0" stroke-width="1.800" stroke-linecap="round"/><circle cx="4.200" cy="4.200" r="2.900" fill="#8fd3f7" stroke="#d9ecf7" stroke-width="1"/></svg>
<span class="t" style="left:181.7px;top:422px;font-size:5.7px;color:#36425f;transform:scaleX(0.907);transform-origin:0 0;">10:44:09 PM</span>
<span class="t" style="left:181.7px;top:431px;font-size:7.3px;color:#5d6ad6;-webkit-text-stroke:0.22px #5d6ad6;transform:scaleX(0.928);transform-origin:0 0;">[Cloud Run] AI ZOOM: Crop from img8</span>
<svg class="abs" style="left:165.0px;top:451.0px" width="10" height="10" viewBox="0 0 10 10" ><path d="M6 6l3 3" stroke="#7a5bd0" stroke-width="1.800" stroke-linecap="round"/><circle cx="4.200" cy="4.200" r="2.900" fill="#8fd3f7" stroke="#d9ecf7" stroke-width="1"/></svg>
<span class="t" style="left:181.7px;top:452px;font-size:5.7px;color:#36425f;transform:scaleX(0.907);transform-origin:0 0;">10:44:09 PM</span>
<span class="t" style="left:181.7px;top:461px;font-size:7.3px;color:#5d6ad6;-webkit-text-stroke:0.22px #5d6ad6;transform:scaleX(0.928);transform-origin:0 0;">[Cloud Run] AI ZOOM: Crop from img2</span>
<svg class="abs" style="left:165.0px;top:480.8px" width="10" height="10" viewBox="0 0 10 10" ><path d="M6 6l3 3" stroke="#7a5bd0" stroke-width="1.800" stroke-linecap="round"/><circle cx="4.200" cy="4.200" r="2.900" fill="#8fd3f7" stroke="#d9ecf7" stroke-width="1"/></svg>
<span class="t" style="left:181.7px;top:481px;font-size:5.7px;color:#36425f;transform:scaleX(0.907);transform-origin:0 0;">10:44:09 PM</span>
<span class="t" style="left:181.7px;top:491px;font-size:7.3px;color:#5d6ad6;-webkit-text-stroke:0.22px #5d6ad6;transform:scaleX(0.928);transform-origin:0 0;">[Cloud Run] AI ZOOM: Crop from img8</span>
<svg class="abs" style="left:165.0px;top:510.6px" width="10" height="10" viewBox="0 0 10 10" ><path d="M6 6l3 3" stroke="#7a5bd0" stroke-width="1.800" stroke-linecap="round"/><circle cx="4.200" cy="4.200" r="2.900" fill="#8fd3f7" stroke="#d9ecf7" stroke-width="1"/></svg>
<span class="t" style="left:181.7px;top:511px;font-size:5.7px;color:#36425f;transform:scaleX(0.907);transform-origin:0 0;">10:44:09 PM</span>
<span class="t" style="left:181.7px;top:520px;font-size:7.3px;color:#5d6ad6;-webkit-text-stroke:0.22px #5d6ad6;transform:scaleX(0.928);transform-origin:0 0;">[Cloud Run] AI ZOOM: Crop from img8</span>
<div class="abs" style="left:166.7px;top:541.5px;width:7.6px;height:6.0px;background:#c8d2e0;border-radius:0.8px;"></div><div class="abs" style="left:167.6px;top:542.3px;width:5.8px;height:4.4px;background:#3d8fe0;border-radius:0.3px;"></div><div class="abs" style="left:165.5px;top:547.7px;width:10.0px;height:1.8px;background:#dfe5ee;border-radius:0.6px;"></div>
<span class="t" style="left:181.7px;top:541px;font-size:5.7px;color:#36425f;transform:scaleX(0.907);transform-origin:0 0;">10:44:06 PM</span>
<svg class="abs" style="left:214.4px;top:540.0px" width="6.5" height="6.5" viewBox="0 0 24 24" fill="none" stroke="#7fb0ff" stroke-width="2.6" stroke-linecap="round" stroke-linejoin="round"><rect x="3" y="3" width="18" height="8" rx="2"/><rect x="3" y="13" width="18" height="8" rx="2"/><path d="M7 7h.01M7 17h.01"/></svg>
<span class="t" style="left:222.7px;top:540px;font-size:6px;color:#86b3fb;font-weight:bold;transform:scaleX(0.824);transform-origin:0 0;">Cloud Run</span>
<span class="t" style="left:181.7px;top:550px;font-size:7.3px;color:#e0763a;-webkit-text-stroke:0.22px #e0763a;transform:scaleX(0.895);transform-origin:0 0;">[Cloud Run] Executing Python analysis code...</span>
<div class="abs" style="left:181.7px;top:560.7px;width:62.6px;height:11.0px;background:#5b3322;border-radius:3px;border:1px solid #7a4a30;"></div>
<svg class="abs" style="left:185.7px;top:563.3px" width="6" height="6" viewBox="0 0 24 24" fill="none" stroke="#f1b48a" stroke-width="2.8" stroke-linecap="round" stroke-linejoin="round"><path d="M8 6l-6 6 6 6M16 6l6 6-6 6M14 4l-4 16"/></svg>
<span class="t" style="left:194.2px;top:564px;font-size:5.7px;color:#f6c8a4;font-weight:bold;transform:scaleX(0.877);transform-origin:0 0;">CODE EXECUTION</span>
<div class="abs" style="left:342.7px;top:180.0px;width:10.3px;height:390.0px;background:#323235;"></div>
<div class="abs" style="left:344.7px;top:191.7px;width:6.4px;height:208.5px;background:#b0b0b0;border-radius:3.2px;"></div>
<svg class="abs" style="left:344.4px;top:182.0px" width="7" height="5" viewBox="0 0 7 5" ><path d="M3.500 .500L6.800 4.500H.2z" fill="#cfcfcf"/></svg>
<svg class="abs" style="left:344.4px;top:562.5px" width="7" height="5" viewBox="0 0 7 5" ><path d="M3.500 4.500L6.800 .5H.2z" fill="#cfcfcf"/></svg>
<div class="abs" style="left:155.5px;top:570.0px;width:197.5px;height:17.0px;background:#131e3c;border-radius:0 0 5px 5px;border:1px solid #152142;"></div>
<svg class="abs" style="left:200.2px;top:576.0px" width="6.5" height="6.5" viewBox="0 0 24 24" fill="none" stroke="#5b8def" stroke-width="2.6" stroke-linecap="round" stroke-linejoin="round"><rect x="3" y="3" width="18" height="8" rx="2"/><rect x="3" y="13" width="18" height="8" rx="2"/><path d="M7 7h.01M7 17h.01"/></svg>
<span class="t" style="left:209.3px;top:576px;font-size:6.3px;color:#5485e6;transform:scaleX(0.887);transform-origin:0 0;">Cloud Run</span>
<svg class="abs" style="left:242.8px;top:576.0px" width="6.5" height="6.5" viewBox="0 0 24 24" fill="none" stroke="#d9773a" stroke-width="2.6" stroke-linecap="round" stroke-linejoin="round"><rect x="4" y="3" width="16" height="18" rx="2"/><path d="M4 9h16M4 15h16M10 3v18"/></svg>
<span class="t" style="left:251.0px;top:576px;font-size:6.3px;color:#d9773a;transform:scaleX(0.873);transform-origin:0 0;">Firestore</span>
<svg class="abs" style="left:280.2px;top:576.0px" width="6.5" height="6.5" viewBox="0 0 24 24" fill="none" stroke="#25a9c9" stroke-width="2.6" stroke-linecap="round" stroke-linejoin="round"><path d="M17.500 19H9a7 7 0 1 1 6.700-9h1.800a4.500 4.500 0 1 1 0 9z"/></svg>
<span class="t" style="left:289.0px;top:576px;font-size:6.3px;color:#25a9c9;transform:scaleX(0.829);transform-origin:0 0;">Storage</span>
<!-- viewer -->
<div class="abs" style="left:361.0px;top:158.5px;width:516.5px;height:428.5px;background:#0b152e;border-radius:5px;border:1px solid #152142;"></div>
<div class="abs" style="left:361.0px;top:158.5px;width:516.5px;height:21.0px;background:#131e3c;border-radius:5px 5px 0 0;border:1px solid #152142;"></div>
<div class="abs" style="left:369.0px;top:163.3px;width:61.0px;height:11.6px;background:#111c39;border-radius:5.8px;border:1px solid #27334f;"></div>
<svg class="abs" style="left:377.0px;top:165.5px" width="5" height="7" viewBox="0 0 5 7" ><path d="M.4.300h4.200v1.200L3.100 3.500l1.500 2v1.200H.4V5.500l1.500-2L.4 1.500z" fill="#e8e8ee"/></svg>
<span class="t" style="left:385.5px;top:166px;font-size:6.4px;color:#fff;font-weight:bold;transform:scaleX(0.866);transform-origin:0 0;">IN PROGRESS</span>
<span class="t" style="left:435.6px;top:166px;font-size:6.5px;color:#46526f;transform:scaleX(0.946);transform-origin:0 0;">Do the plans provide carbon monoxide alarms outside each separate sleeping area in the immediat...</span>
<div class="abs" style="left:829.0px;top:164.7px;width:41.0px;height:9.4px;background:#131f3c;border-radius:4.7px;border:1px solid #222e4b;"></div>
<span class="t" style="left:835.8px;top:166px;font-size:6.3px;color:#a4afcb;font-weight:bold;transform:scaleX(0.984);transform-origin:0 0;">Zoom 1/4</span>
<div class="abs" style="left:361.0px;top:570.0px;width:516.5px;height:17.0px;background:#131e3c;border-radius:0 0 5px 5px;border:1px solid #152142;"></div>
<svg class="abs" style="left:368.6px;top:575.5px" width="7.5" height="7.5" viewBox="0 0 24 24" fill="none" stroke="#7d88a5" stroke-width="2.2" stroke-linecap="round" stroke-linejoin="round"><path d="M14 2H6a2 2 0 0 0-2 2v16a2 2 0 0 0 2 2h12a2 2 0 0 0 2-2V8z"/><path d="M14 2v6h6M8 13h8M8 17h8"/></svg>
<span class="t" style="left:380.7px;top:576px;font-size:6.3px;color:#aab3c9;font-weight:bold;transform:scaleX(0.905);transform-origin:0 0;">3 Pages Loaded:</span>
<span class="t" style="left:431.7px;top:576px;font-size:6.3px;color:#47536f;transform:scaleX(0.857);transform-origin:0 0;">2, 3, 8</span>
<div class="abs" style="left:497.7px;top:250.8px;width:241.5px;height:247.5px;background:#fdfdfd;border-radius:6px;"></div>
<div class="abs" style="left:527.6px;top:254.0px;width:186.6px;height:202.0px;background:transparent;border:1.6px solid #1e1e1e;"></div>
<div class="abs" style="left:527.6px;top:266.0px;width:186.6px;height:1.5px;background:#1e1e1e;"></div>
<div class="abs" style="left:551.2px;top:254.0px;width:1.5px;height:202.0px;background:#1e1e1e;"></div>
<span class="t" style="left:568.5px;top:258px;font-size:8.2px;color:#1d1d1d;font-weight:bold;transform:scaleX(1.173);transform-origin:0 0;">LEGEND:</span>
<span class="t" style="left:559.8px;top:273px;font-size:7.2px;color:#3a3a3a;-webkit-text-stroke:0.18px #3a3a3a;transform:scaleX(0.930);transform-origin:0 0;">Ceiling mount light fixture.</span>
<span class="t" style="left:559.8px;top:286px;font-size:7.2px;color:#3a3a3a;-webkit-text-stroke:0.18px #3a3a3a;transform:scaleX(0.929);transform-origin:0 0;">Recessed light fixture.</span>
<span class="t" style="left:559.8px;top:298px;font-size:7.2px;color:#3a3a3a;-webkit-text-stroke:0.18px #3a3a3a;transform:scaleX(0.947);transform-origin:0 0;">Ceiling mount light fixture with pull chain.</span>
<span class="t" style="left:559.8px;top:311px;font-size:7.2px;color:#3a3a3a;-webkit-text-stroke:0.18px #3a3a3a;transform:scaleX(0.937);transform-origin:0 0;">Pendant light fixture.</span>
<span class="t" style="left:559.8px;top:324px;font-size:7.2px;color:#3a3a3a;-webkit-text-stroke:0.18px #3a3a3a;transform:scaleX(0.946);transform-origin:0 0;">Vapor proof recessed light fixture.</span>
<span class="t" style="left:559.8px;top:336px;font-size:7.2px;color:#3a3a3a;-webkit-text-stroke:0.18px #3a3a3a;transform:scaleX(0.933);transform-origin:0 0;">Wall sconce light fixture.</span>
<span class="t" style="left:559.8px;top:353px;font-size:7.2px;color:#3a3a3a;-webkit-text-stroke:0.18px #3a3a3a;transform:scaleX(0.946);transform-origin:0 0;">Exhaust fan - 50cfm, vented to outside air.</span>
<span class="t" style="left:559.8px;top:366px;font-size:7.2px;color:#3a3a3a;-webkit-text-stroke:0.18px #3a3a3a;transform:scaleX(0.920);transform-origin:0 0;">Switch</span>
<span class="t" style="left:559.8px;top:378px;font-size:7.2px;color:#3a3a3a;-webkit-text-stroke:0.18px #3a3a3a;transform:scaleX(0.939);transform-origin:0 0;">Dimmer switch</span>
<span class="t" style="left:559.8px;top:391px;font-size:7.2px;color:#3a3a3a;-webkit-text-stroke:0.18px #3a3a3a;transform:scaleX(0.935);transform-origin:0 0;">110 V conv duplex outlet</span>
<span class="t" style="left:559.8px;top:406px;font-size:7.2px;color:#3a3a3a;-webkit-text-stroke:0.18px #3a3a3a;transform:scaleX(0.932);transform-origin:0 0;">110 V conv duplex outlet w/ GFCI</span>
<span class="t" style="left:559.8px;top:422px;font-size:7.2px;color:#3a3a3a;-webkit-text-stroke:0.18px #3a3a3a;transform:scaleX(0.935);transform-origin:0 0;">Smoke / Monoxide detector hardwired (With</span>
<span class="t" style="left:559.8px;top:430px;font-size:7.2px;color:#3a3a3a;-webkit-text-stroke:0.18px #3a3a3a;transform:scaleX(0.937);transform-origin:0 0;">battery back-up. Detectors shall sound an</span>
<span class="t" style="left:559.8px;top:438px;font-size:7.2px;color:#3a3a3a;-webkit-text-stroke:0.18px #3a3a3a;transform:scaleX(0.940);transform-origin:0 0;">alarm audible in all sleeping areas.)</span>
<svg class="abs" style="left:533.8px;top:270.9px" width="11.90" height="11.90" viewBox="0 0 14 14" fill="none" stroke="#6a6a6a" stroke-width=".800"><rect x="4" y="4" width="6" height="6"/><path d="M4 4L2.500 2.500M10 4l1.500-1.500M4 10l-1.500 1.500M10 10l1.500 1.500"/></svg>
<svg class="abs" style="left:533.8px;top:283.2px" width="11.90" height="11.90" viewBox="0 0 14 14" fill="none" stroke="#6a6a6a" stroke-width=".800"><rect x="4" y="4" width="6" height="6"/><path d="M4 4l6 6M10 4l-6 6"/></svg>
<svg class="abs" style="left:533.8px;top:296.1px" width="11.90" height="11.90" viewBox="0 0 14 14" fill="none" stroke="#6a6a6a" stroke-width=".800"><circle cx="7" cy="7" r="2.800"/><path d="M7 2v2.200M7 9.800V12M2 7h2.200M9.800 7H12"/></svg>
<span class="t" style="left:543.0px;top:305px;font-size:3px;color:#555;">PC</span>
<svg class="abs" style="left:533.8px;top:308.4px" width="11.90" height="11.90" viewBox="0 0 14 14" fill="none" stroke="#6a6a6a" stroke-width=".800"><circle cx="7" cy="7" r="2.600"/></svg>
<svg class="abs" style="left:533.8px;top:321.8px" width="11.90" height="11.90" viewBox="0 0 14 14" fill="none" stroke="#6a6a6a" stroke-width=".800"><circle cx="7" cy="7" r="2.300"/><circle cx="7" cy="7" r=".900"/></svg>
<svg class="abs" style="left:533.8px;top:334.2px" width="11.90" height="11.90" viewBox="0 0 14 14" fill="none" stroke="#6a6a6a" stroke-width=".800"><path d="M4.300 5.500h5.400v3a2.700 2.700 0 0 1-5.400 0zM5.500 5.500V4h3v1.500"/></svg>
<div class="abs" style="left:531.9px;top:348.7px;width:17.0px;height:15.8px;background:transparent;border:.8px solid #8a8a8a;"></div>
<svg class="abs" style="left:534.1px;top:350.3px" width="12.60" height="12.60" viewBox="0 0 14 14" fill="none" stroke="#6a6a6a" stroke-width=".800"><circle cx="7" cy="7" r="5.300"/><path d="M3.200 5.200L10.800 8.800V5.200L3.200 8.800z"/></svg>
<span class="t" style="left:539.0px;top:367px;font-size:5.6px;color:#2a2a2a;font-weight:bold;">$</span>
<span class="t" style="left:531.3px;top:381px;font-size:3.3px;color:#444;font-weight:bold;">DIM</span>
<span class="t" style="left:540.8px;top:380px;font-size:5px;color:#2a2a2a;font-weight:bold;">$</span>
<svg class="abs" style="left:533.5px;top:387.9px" width="12.60" height="12.60" viewBox="0 0 14 14" fill="none" stroke="#6a6a6a" stroke-width=".800"><circle cx="8.500" cy="7" r="3"/><path d="M2 7h3.500M7.600 4.300v5.400M9.400 4.300v5.400"/></svg>
<svg class="abs" style="left:529.7px;top:403.2px" width="12.60" height="12.60" viewBox="0 0 14 14" fill="none" stroke="#6a6a6a" stroke-width=".800"><circle cx="8.500" cy="7" r="3"/><path d="M2 7h3.500M7.600 4.300v5.400M9.400 4.300v5.400"/></svg>
<span class="t" style="left:537.8px;top:406.2px;font-size:7.100px;color:#2c2c2c;transform:rotate(-90deg);transform-origin:50% 50%">GFCI</span>
<svg class="abs" style="left:531.2px;top:425.6px" width="18.00" height="18.00" viewBox="0 0 18 18" fill="none" stroke="#6a6a6a" stroke-width=".800"><circle cx="9" cy="9" r="8.200" stroke-width="1"/></svg>
<span class="t" style="left:533.7px;top:433px;font-size:4.5px;color:#444;transform:scaleX(0.926);transform-origin:0 0;">CO/SD</span>
<div class="abs" style="left:503.9px;top:255.7px;width:50.0px;height:12.4px;background:rgba(38,38,42,.95);border-radius:4px;"></div>
<svg class="abs" style="left:510.1px;top:258.4px" width="7" height="7" viewBox="0 0 24 24" fill="none" stroke="#e6e6e6" stroke-width="2.4" stroke-linecap="round" stroke-linejoin="round"><path d="M2 12s3.600-7 10-7 10 7 10 7-3.600 7-10 7-10-7-10-7z"/><circle cx="12" cy="12" r="3"/></svg>
<span class="t" style="left:520.0px;top:259px;font-size:6.5px;color:#fff;font-weight:bold;transform:scaleX(0.929);transform-origin:0 0;">Zoom 1/4</span>
<div class="abs" style="left:558.5px;top:255.7px;width:26.0px;height:12.4px;background:rgba(38,38,42,.95);border-radius:4px;"></div>
<svg class="abs" style="left:565.2px;top:258.4px" width="7" height="7" viewBox="0 0 24 24" fill="none" stroke="#e6e6e6" stroke-width="2.4" stroke-linecap="round" stroke-linejoin="round"><path d="M14 2H6a2 2 0 0 0-2 2v16a2 2 0 0 0 2 2h12a2 2 0 0 0 2-2V8z"/><path d="M14 2v6h6M8 13h8M8 17h8"/></svg>
<span class="t" style="left:574.8px;top:259px;font-size:6.5px;color:#fff;font-weight:bold;">8</span>
<!-- code -->
<div class="abs" style="left:884.7px;top:158.5px;width:210.0px;height:428.5px;background:#0b152e;border-radius:5px;border:1px solid #152142;"></div>
<div class="abs" style="left:884.7px;top:158.5px;width:210.0px;height:21.0px;background:#131e3c;border-radius:5px 0 0 0;border:1px solid #152142;"></div>
<svg class="abs" style="left:892.4px;top:164.9px" width="8.5" height="8.5" viewBox="0 0 24 24" fill="none" stroke="#e8703a" stroke-width="2.6" stroke-linecap="round" stroke-linejoin="round"><path d="M8 6l-6 6 6 6M16 6l6 6-6 6M14 4l-4 16"/></svg>
<span class="t" style="left:905.8px;top:165px;font-size:8.4px;color:#fff;font-weight:bold;transform:scaleX(0.816);transform-origin:0 0;">Code Execution</span>
<div class="abs" style="left:1052.8px;top:164.2px;width:22.0px;height:10.4px;background:#131f3c;border-radius:5.2px;border:1px solid #24304d;"></div>
<span class="t" style="left:1059.3px;top:166px;font-size:6.2px;color:#a4afcb;font-weight:bold;transform:scaleX(1.091);transform-origin:0 0;">1/2</span>
<span class="t" style="left:890.0px;top:186px;font-size:6.8px;color:#ea5436;font-weight:bold;transform:scaleX(0.868);transform-origin:0 0;">Python</span>
<span class="t" style="left:1044.0px;top:187px;font-size:5.8px;color:#303c59;transform:scaleX(1.003);transform-origin:0 0;">10:44:08 PM</span>
<div class="abs" style="left:890.0px;top:198.6px;width:185.6px;height:290.2px;background:#060b1a;border-radius:3px;"></div>
<span class="t" style="left:895.2px;top:206px;font-size:5.66px;color:#78de9e;font-weight:bold;font-family:'Liberation Mono',monospace;">import PIL.Image</span>
<span class="t" style="left:895.2px;top:216px;font-size:5.66px;color:#78de9e;font-weight:bold;font-family:'Liberation Mono',monospace;">import json</span>
<span class="t" style="left:895.2px;top:236px;font-size:5.66px;color:#78de9e;font-weight:bold;font-family:'Liberation Mono',monospace;"># Load images</span>
<span class="t" style="left:895.2px;top:246px;font-size:5.66px;color:#78de9e;font-weight:bold;font-family:'Liberation Mono',monospace;">img2 = PIL.Image.open('input_file_0.jpeg')</span>
<span class="t" style="left:895.2px;top:256px;font-size:5.66px;color:#78de9e;font-weight:bold;font-family:'Liberation Mono',monospace;">img3 = PIL.Image.open('input_file_1.jpeg')</span>
<span class="t" style="left:895.2px;top:267px;font-size:5.66px;color:#78de9e;font-weight:bold;font-family:'Liberation Mono',monospace;">img8 = PIL.Image.open('input_file_2.jpeg')</span>
<span class="t" style="left:895.2px;top:287px;font-size:5.66px;color:#78de9e;font-weight:bold;font-family:'Liberation Mono',monospace;"># 1. Check Page 8 Legend</span>
<span class="t" style="left:895.2px;top:297px;font-size:5.66px;color:#78de9e;font-weight:bold;font-family:'Liberation Mono',monospace;">w8, h8 = img8.size</span>
<span class="t" style="left:895.2px;top:307px;font-size:5.66px;color:#78de9e;font-weight:bold;font-family:'Liberation Mono',monospace;">legend_crop = img8.crop((0.09 * w8, 0.75 * h8, 0.22</span>
<span class="t" style="left:895.2px;top:317px;font-size:5.66px;color:#78de9e;font-weight:bold;font-family:'Liberation Mono',monospace;">* w8, 0.95 * h8))</span>
<span class="t" style="left:895.2px;top:327px;font-size:5.66px;color:#78de9e;font-weight:bold;font-family:'Liberation Mono',monospace;">legend_crop.save('legend_p8.png')</span>
<span class="t" style="left:895.2px;top:347px;font-size:5.66px;color:#78de9e;font-weight:bold;font-family:'Liberation Mono',monospace;"># 2. Check Page 8 Electrical Plan 2 (2nd Floor)</span>
<span class="t" style="left:895.2px;top:357px;font-size:5.66px;color:#78de9e;font-weight:bold;font-family:'Liberation Mono',monospace;">elec2_crop = img8.crop((0.55 * w8, 0.3 * h8, 0.85 *</span>
<span class="t" style="left:895.2px;top:367px;font-size:5.66px;color:#78de9e;font-weight:bold;font-family:'Liberation Mono',monospace;">w8, 0.9 * h8))</span>
<span class="t" style="left:895.2px;top:377px;font-size:5.66px;color:#78de9e;font-weight:bold;font-family:'Liberation Mono',monospace;">elec2_crop.save('elec2_p8.png')</span>
<span class="t" style="left:895.2px;top:397px;font-size:5.66px;color:#78de9e;font-weight:bold;font-family:'Liberation Mono',monospace;"># 3. Check Page 2 General Notes - look for CO alarm</span>
<span class="t" style="left:895.2px;top:408px;font-size:5.66px;color:#78de9e;font-weight:bold;font-family:'Liberation Mono',monospace;">section (CRC R315)</span>
<span class="t" style="left:895.2px;top:418px;font-size:5.66px;color:#78de9e;font-weight:bold;font-family:'Liberation Mono',monospace;">w2, h2 = img2.size</span>
<span class="t" style="left:895.2px;top:428px;font-size:5.66px;color:#78de9e;font-weight:bold;font-family:'Liberation Mono',monospace;"># Note 6 in column 1 looks like it's about CO alarms</span>
<span class="t" style="left:895.2px;top:438px;font-size:5.66px;color:#78de9e;font-weight:bold;font-family:'Liberation Mono',monospace;">notes_crop = img2.crop((0.01 * w2, 0.2 * h2, 0.3 *</span>
<span class="t" style="left:895.2px;top:448px;font-size:5.66px;color:#78de9e;font-weight:bold;font-family:'Liberation Mono',monospace;">w2, 0.5 * h2))</span>
<span class="t" style="left:895.2px;top:458px;font-size:5.66px;color:#78de9e;font-weight:bold;font-family:'Liberation Mono',monospace;">notes_crop.save('notes_p2.png')</span>
<span class="t" style="left:895.2px;top:478px;font-size:5.66px;color:#78de9e;font-weight:bold;font-family:'Liberation Mono',monospace;">print("Crops saved for inspection.")</span>
<!-- sidebar -->
<div class="abs" style="left:0.0px;top:56.5px;width:147.3px;height:537.0px;background:#0a0a0a;"></div>
<div class="abs" style="left:-1.0px;top:65.5px;width:20.0px;height:20.0px;background:linear-gradient(135deg,#ecc0f8,#b46dec);border-radius:5px;"></div>
<svg class="abs" style="left:3.5px;top:70.0px" width="11" height="11" viewBox="0 0 24 24" fill="#f8ecff"><path d="M13 3l1.800 5.200L20 10l-5.200 1.800L13 17l-1.800-5.200L6 10l5.200-1.800zM6 15l.900 2.100L9 18l-2.100.900L6 21l-.900-2.100L3 18l2.100-.900z"/></svg>
<span class="t" style="left:24.4px;top:66px;font-size:9.4px;color:#fff;font-weight:bold;transform:scaleX(0.885);transform-origin:0 0;">PCS Admin</span>
<span class="t" style="left:24.4px;top:79px;font-size:7.9px;color:#adadb3;transform:scaleX(0.914);transform-origin:0 0;">Command Center</span>
<div class="abs" style="left:0.0px;top:93.5px;width:147.3px;height:1.0px;background:#1d1d1f;"></div>
<div class="abs" style="left:-6.0px;top:410.6px;width:135.0px;height:27.5px;background:#fafafa;border-radius:6px;"></div>
<svg class="abs" style="left:4.2px;top:110.7px" width="10.5" height="10.5" viewBox="0 0 24 24" fill="none" stroke="#bdbdc3" stroke-width="2.3" stroke-linecap="round" stroke-linejoin="round"><rect x="4" y="3" width="6" height="6" rx="1.500"/><rect x="14" y="3" width="6" height="6" rx="1.500"/><rect x="4" y="14" width="6" height="7" rx="1"/><rect x="14" y="14" width="6" height="7" rx="1"/></svg>
<span class="t" style="left:21.3px;top:112px;font-size:9.3px;color:#d6d6da;font-weight:bold;transform:scaleX(0.889);transform-origin:0 0;">Command Center</span>
<svg class="abs" style="left:4.2px;top:136.7px" width="10.5" height="10.5" viewBox="0 0 24 24" fill="none" stroke="#bdbdc3" stroke-width="2.3" stroke-linecap="round" stroke-linejoin="round"><path d="M4 8l3.500 4L12 5l4.500 7L20 8l-1.500 9h-13z"/><path d="M6 21h12"/></svg>
<span class="t" style="left:21.3px;top:138px;font-size:9.3px;color:#d6d6da;font-weight:bold;transform:scaleX(0.859);transform-origin:0 0;">CEO Briefing</span>
<div class="abs" style="left:102.9px;top:134.5px;width:19.3px;height:14.8px;background:#f5a524;border-radius:3px;"></div><span class="t" style="left:106.6px;top:139px;font-size:6.2px;color:#fff;font-weight:bold;transform:scaleX(0.880);transform-origin:0 0;">CEO</span>
<svg class="abs" style="left:4.2px;top:164.2px" width="10.5" height="10.5" viewBox="0 0 24 24" fill="none" stroke="#bdbdc3" stroke-width="2.3" stroke-linecap="round" stroke-linejoin="round"><rect x="4" y="9" width="16" height="11" rx="3"/><path d="M12 9V5M9 14v2M15 14v2M2 14v2M22 14v2"/></svg>
<span class="t" style="left:21.3px;top:165px;font-size:9.3px;color:#d6d6da;font-weight:bold;transform:scaleX(0.887);transform-origin:0 0;">AI Agents</span>
<div class="abs" style="left:103.8px;top:162.0px;width:18.4px;height:14.8px;background:#a855f7;border-radius:3px;"></div><span class="t" style="left:108.1px;top:166px;font-size:6.2px;color:#fff;font-weight:bold;transform:scaleX(0.880);transform-origin:0 0;">AGI</span>
<svg class="abs" style="left:4.2px;top:190.9px" width="10.5" height="10.5" viewBox="0 0 24 24" fill="none" stroke="#bdbdc3" stroke-width="2.3" stroke-linecap="round" stroke-linejoin="round"><rect x="3" y="4" width="18" height="12" rx="1.500"/><path d="M8 21l4-5 4 5"/></svg>
<span class="t" style="left:21.3px;top:192px;font-size:9.3px;color:#d6d6da;font-weight:bold;transform:scaleX(0.874);transform-origin:0 0;">Reports</span>
<div class="abs" style="left:100.0px;top:188.8px;width:22.2px;height:14.8px;background:#3b82f6;border-radius:3px;"></div><span class="t" style="left:104.7px;top:193px;font-size:6.2px;color:#fff;font-weight:bold;transform:scaleX(0.880);transform-origin:0 0;">NEW</span>
<svg class="abs" style="left:4.2px;top:220.9px" width="10.5" height="10.5" viewBox="0 0 24 24" fill="none" stroke="#bdbdc3" stroke-width="2.3" stroke-linecap="round" stroke-linejoin="round"><circle cx="12" cy="12" r="9"/><circle cx="12" cy="12" r="4.500"/><circle cx="12" cy="12" r="1"/></svg>
<span class="t" style="left:21.3px;top:222px;font-size:9.3px;color:#d6d6da;font-weight:bold;transform:scaleX(0.921);transform-origin:0 0;">Marketing Hub</span>
<div class="abs" style="left:108.4px;top:218.8px;width:13.8px;height:14.8px;background:#22c55e;border-radius:3px;"></div><span class="t" style="left:112.6px;top:223px;font-size:6.2px;color:#fff;font-weight:bold;transform:scaleX(0.880);transform-origin:0 0;">AI</span>
<svg class="abs" style="left:4.2px;top:248.2px" width="10.5" height="10.5" viewBox="0 0 24 24" fill="none" stroke="#bdbdc3" stroke-width="2.3" stroke-linecap="round" stroke-linejoin="round"><circle cx="18" cy="5" r="3"/><circle cx="6" cy="12" r="3"/><circle cx="18" cy="19" r="3"/><path d="M8.600 13.500l6.800 4M15.400 6.500l-6.800 4"/></svg>
<span class="t" style="left:21.3px;top:249px;font-size:9.3px;color:#d6d6da;font-weight:bold;transform:scaleX(0.882);transform-origin:0 0;">Social Media</span>
<div class="abs" style="left:102.5px;top:246.0px;width:19.7px;height:14.8px;background:#3b82f6;border-radius:3px;"></div><span class="t" style="left:106.3px;top:250px;font-size:6.2px;color:#fff;font-weight:bold;transform:scaleX(0.880);transform-origin:0 0;">LIVE</span>
<svg class="abs" style="left:4.2px;top:280.2px" width="10.5" height="10.5" viewBox="0 0 24 24" fill="none" stroke="#bdbdc3" stroke-width="2.3" stroke-linecap="round" stroke-linejoin="round"><path d="M12 3a9 9 0 1 0 0 18c1.600 0 2-1.200 1.500-2.200-.700-1.400.200-2.800 1.800-2.800H18a3 3 0 0 0 3-3c0-5.500-4-10-9-10z"/><circle cx="8" cy="10" r=".800"/><circle cx="12" cy="7.500" r=".800"/><circle cx="16" cy="10" r=".800"/></svg>
<span class="t" style="left:21.3px;top:276px;font-size:9.3px;color:#d6d6da;font-weight:bold;transform:scaleX(0.915);transform-origin:0 0;">Marketing</span>
<span class="t" style="left:21.3px;top:288px;font-size:9.3px;color:#d6d6da;font-weight:bold;transform:scaleX(0.849);transform-origin:0 0;">Designs</span>
<div class="abs" style="left:100.0px;top:278.1px;width:22.2px;height:14.8px;background:#ec4899;border-radius:3px;"></div><span class="t" style="left:104.7px;top:282px;font-size:6.2px;color:#fff;font-weight:bold;transform:scaleX(0.880);transform-origin:0 0;">NEW</span>
<svg class="abs" style="left:4.2px;top:311.6px" width="10.5" height="10.5" viewBox="0 0 24 24" fill="none" stroke="#bdbdc3" stroke-width="2.3" stroke-linecap="round" stroke-linejoin="round"><rect x="3" y="5" width="18" height="14" rx="2"/><path d="M3 7l9 6 9-6"/></svg>
<span class="t" style="left:21.3px;top:313px;font-size:9.3px;color:#d6d6da;font-weight:bold;transform:scaleX(0.880);transform-origin:0 0;">Communications</span>
<svg class="abs" style="left:4.2px;top:337.6px" width="10.5" height="10.5" viewBox="0 0 24 24" fill="none" stroke="#bdbdc3" stroke-width="2.3" stroke-linecap="round" stroke-linejoin="round"><path d="M5 16c-1.500 1.300-2 5-2 5s3.700-.500 5-2c.700-.800.700-2.100-.100-2.900a2.200 2.200 0 0 0-2.900-.100z"/><path d="M12 15l-3-3a22 22 0 0 1 2-4A12.900 12.900 0 0 1 22 2c0 2.700-.800 7.500-6 11a22 22 0 0 1-4 2z"/><path d="M9 12H4s.500-3 2-4c1.600-1 5 0 5 0M12 15v5s3-.500 4-2c1-1.600 0-5 0-5"/></svg>
<span class="t" style="left:21.3px;top:339px;font-size:9.3px;color:#d6d6da;font-weight:bold;transform:scaleX(0.904);transform-origin:0 0;">Growth Hub</span>
<div class="abs" style="left:101.9px;top:335.4px;width:20.3px;height:14.8px;background:#f97316;border-radius:3px;"></div><span class="t" style="left:106.3px;top:340px;font-size:6.2px;color:#fff;font-weight:bold;transform:scaleX(0.880);transform-origin:0 0;">HOT</span>
<svg class="abs" style="left:4.2px;top:366.4px" width="10.5" height="10.5" viewBox="0 0 24 24" fill="none" stroke="#bdbdc3" stroke-width="2.3" stroke-linecap="round" stroke-linejoin="round"><path d="M4 3v18h17M9 17V9M13 17V5M17 17v-7"/></svg>
<span class="t" style="left:21.3px;top:368px;font-size:9.3px;color:#d6d6da;font-weight:bold;transform:scaleX(0.856);transform-origin:0 0;">Analytics</span>
<svg class="abs" style="left:4.2px;top:392.2px" width="10.5" height="10.5" viewBox="0 0 24 24" fill="none" stroke="#bdbdc3" stroke-width="2.3" stroke-linecap="round" stroke-linejoin="round"><path d="M2 12h4l3-8 5 16 3-8h5"/></svg>
<span class="t" style="left:21.3px;top:393px;font-size:9.3px;color:#d6d6da;font-weight:bold;transform:scaleX(0.869);transform-origin:0 0;">Live Activity</span>
<div class="abs" style="left:102.5px;top:390.1px;width:19.7px;height:14.8px;background:#e5484d;border-radius:3px;"></div><span class="t" style="left:106.3px;top:394px;font-size:6.2px;color:#fff;font-weight:bold;transform:scaleX(0.880);transform-origin:0 0;">LIVE</span>
<svg class="abs" style="left:4.2px;top:419.4px" width="10.5" height="10.5" viewBox="0 0 24 24" fill="none" stroke="#66666c" stroke-width="2.3" stroke-linecap="round" stroke-linejoin="round"><circle cx="12" cy="12" r="2"/><path d="M7.800 16.200a6 6 0 0 1 0-8.400M16.200 7.800a6 6 0 0 1 0 8.400M4.900 19.100a10 10 0 0 1 0-14.200M19.100 4.900a10 10 0 0 1 0 14.200"/></svg>
<span class="t" style="left:21.3px;top:421px;font-size:9.3px;color:#3a3a40;font-weight:bold;transform:scaleX(0.877);transform-origin:0 0;">AI Thinking</span>
<div class="abs" style="left:102.5px;top:417.3px;width:19.7px;height:14.8px;background:#a855f7;border-radius:3px;"></div><span class="t" style="left:106.3px;top:422px;font-size:6.2px;color:#fff;font-weight:bold;transform:scaleX(0.880);transform-origin:0 0;">LIVE</span>
<svg class="abs" style="left:4.2px;top:445.6px" width="10.5" height="10.5" viewBox="0 0 24 24" fill="none" stroke="#bdbdc3" stroke-width="2.3" stroke-linecap="round" stroke-linejoin="round"><path d="M2 9V6a1 1 0 0 1 1-1h18a1 1 0 0 1 1 1v3a3 3 0 0 0 0 6v3a1 1 0 0 1-1 1H3a1 1 0 0 1-1-1v-3a3 3 0 0 0 0-6z"/><path d="M9 5v3M9 11v2M9 16v3M15 5v3M15 11v2M15 16v3"/></svg>
<span class="t" style="left:21.3px;top:447px;font-size:9.3px;color:#d6d6da;font-weight:bold;transform:scaleX(0.847);transform-origin:0 0;">Tickets</span>
<svg class="abs" style="left:4.2px;top:471.8px" width="10.5" height="10.5" viewBox="0 0 24 24" fill="none" stroke="#bdbdc3" stroke-width="2.3" stroke-linecap="round" stroke-linejoin="round"><path d="M6 9a6 6 0 0 1 12 0c0 6 2.500 8 2.500 8h-17S6 15 6 9z"/><path d="M10.300 21a2 2 0 0 0 3.400 0"/></svg>
<span class="t" style="left:21.3px;top:473px;font-size:9.3px;color:#d6d6da;font-weight:bold;transform:scaleX(0.888);transform-origin:0 0;">Notifications</span>
<div class="abs" style="left:100.0px;top:469.6px;width:22.2px;height:14.8px;background:#22c55e;border-radius:3px;"></div><span class="t" style="left:104.7px;top:474px;font-size:6.2px;color:#fff;font-weight:bold;transform:scaleX(0.880);transform-origin:0 0;">NEW</span>
<svg class="abs" style="left:4.2px;top:497.8px" width="10.5" height="10.5" viewBox="0 0 24 24" fill="none" stroke="#bdbdc3" stroke-width="2.3" stroke-linecap="round" stroke-linejoin="round"><path d="M12 22s8-4 8-10V5l-8-3-8 3v7c0 6 8 10 8 10z"/></svg>
<span class="t" style="left:21.3px;top:499px;font-size:9.3px;color:#d6d6da;font-weight:bold;transform:scaleX(0.858);transform-origin:0 0;">Security</span>
<svg class="abs" style="left:4.2px;top:523.0px" width="10.5" height="10.5" viewBox="0 0 24 24" fill="none" stroke="#bdbdc3" stroke-width="2.3" stroke-linecap="round" stroke-linejoin="round"><rect x="8" y="7" width="8" height="13" rx="4"/><path d="M9 7a3 3 0 0 1 6 0M3 13h5M16 13h5M4 21l4-3M20 21l-4-3M4 6l4 3M20 6l-4 3M12 11v9"/></svg>
<span class="t" style="left:21.3px;top:524px;font-size:9.3px;color:#d6d6da;font-weight:bold;transform:scaleX(0.831);transform-origin:0 0;">Errors</span>
<div class="abs" style="left:108.4px;top:520.8px;width:13.8px;height:14.8px;background:#e5484d;border-radius:3px;"></div><span class="t" style="left:112.6px;top:525px;font-size:6.2px;color:#fff;font-weight:bold;transform:scaleX(0.880);transform-origin:0 0;">AI</span>
<div class="abs" style="left:0.0px;top:212.5px;width:129.0px;height:1.0px;background:#1c1c1e;"></div>
<div class="abs" style="left:0.0px;top:329.5px;width:129.0px;height:1.0px;background:#1c1c1e;"></div>
<div class="abs" style="left:0.0px;top:357.4px;width:129.0px;height:1.0px;background:#1c1c1e;"></div>
<div class="abs" style="left:0.0px;top:544.3px;width:129.0px;height:1.0px;background:#1c1c1e;"></div>
<svg class="abs" style="left:4.9px;top:553.0px" width="9" height="9" viewBox="0 0 24 24" fill="none" stroke="#bdbdc3" stroke-width="2.3" stroke-linecap="round" stroke-linejoin="round"><path d="M2 12h4l3-8 5 16 3-8h5"/></svg>
<div class="abs" style="left:21.0px;top:555.5px;width:14.0px;height:1.3px;background:#77777b;"></div>
<div class="abs" style="left:111.0px;top:551.5px;width:11.0px;height:6.0px;background:#22c55e;border-radius:3px 3px 0 0;"></div>
<div class="abs" style="left:137.2px;top:95.3px;width:10.3px;height:461.7px;background:#303032;"></div>
<div class="abs" style="left:139.4px;top:108.0px;width:6.6px;height:290.8px;background:#adadad;border-radius:3.3px;"></div>
<svg class="abs" style="left:139.5px;top:98.5px" width="7" height="5" viewBox="0 0 7 5" ><path d="M3.500 .500L6.800 4.500H.2z" fill="#c9c9c9"/></svg>
<svg class="abs" style="left:139.5px;top:549.5px" width="7" height="5" viewBox="0 0 7 5" ><path d="M3.500 4.500L6.800 .5H.2z" fill="#c9c9c9"/></svg>
<div class="abs" style="left:0.0px;top:557.0px;width:147.3px;height:36.0px;background:#0a0a0a;border-top:1px solid #1c1c1e;"></div>
<svg class="abs" style="left:6.5px;top:572.0px" width="9" height="9" viewBox="0 0 24 24" fill="none" stroke="#b9b9be" stroke-width="2.3" stroke-linecap="round" stroke-linejoin="round"><path d="M15 5l-7 7 7 7"/></svg>
<span class="t" style="left:21.3px;top:573px;font-size:9.3px;color:#cfcfd4;font-weight:bold;transform:scaleX(0.885);transform-origin:0 0;">Back to App</span>
<div class="abs" style="left:0.0px;top:593.2px;width:1080.0px;height:16.0px;background:#0a0a0a;border-top:1px solid #191919;"></div>
<span class="t" style="left:10.8px;top:598px;font-size:8.8px;color:#f6f6f6;-webkit-text-stroke:0.2px #f6f6f6;transform:scaleX(0.881);transform-origin:0 0;">Video edited and sped up for demo purposes.</span>
</div>
<div id="soft"></div>
</body>
</html>
